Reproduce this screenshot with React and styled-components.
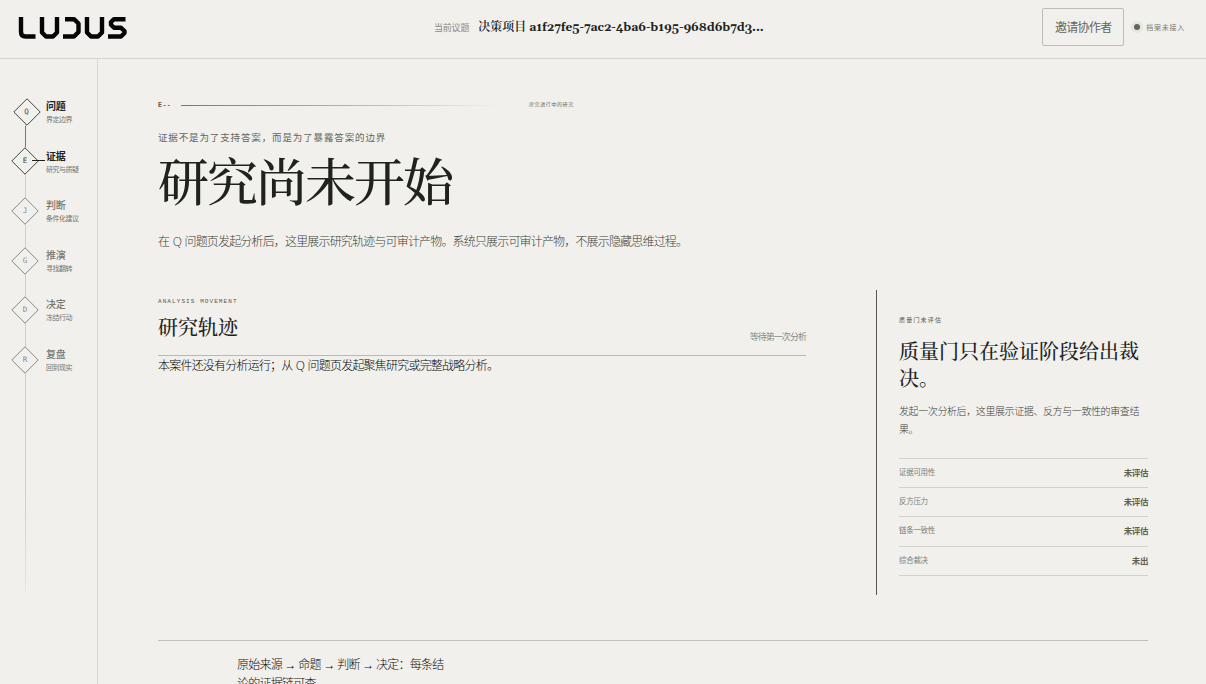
import React from "react";
import styled, { createGlobalStyle } from "styled-components";

const sans = `"Open Sans", "Noto Sans CJK SC", sans-serif`;
const cjk = `"Noto Sans CJK SC", sans-serif`;
const serif = `"Liberation Serif", "Noto Serif CJK SC", "Noto Serif SC", "Source Han Serif SC", "Noto Sans CJK SC", serif`;
const mono = `"Liberation Mono", "Noto Sans CJK SC", monospace`;

const steps = [
  { code: "Q", title: "问题", note: "界定边界", state: "done" },
  { code: "E", title: "证据", note: "研究与质疑", state: "current" },
  { code: "J", title: "判断", note: "条件化建议" },
  { code: "G", title: "推演", note: "寻找翻转" },
  { code: "D", title: "决定", note: "冻结行动" },
  { code: "R", title: "复盘", note: "回到现实" },
];

const gates = [
  ["证据可用性", "未评估"],
  ["反方压力", "未评估"],
  ["链条一致性", "未评估"],
  ["综合裁决", "未出"],
];

const Logo = () => (
  <StyledLogo viewBox="0 0 110 24" fill="none" aria-label="LUDUS">
    <path d="M3 1V16Q3 20.5 7.5 20.5H17.5" />
    <path d="M24 1V16.5L28 20.5H35L39 16.5V1" />
    <path d="M47 3.2H56L60.5 7.5V16L56 20.5H45" />
    <path d="M69 1V16.5L73 20.5H80L84 16.5V1" />
    <path d="M107.5 3.2H96L93 6V8.8L96 11.8H103L106.5 15V17L103 20.5H90" />
  </StyledLogo>
);

const Step = ({ code, title, note, state }) => (
  <StyledStep $state={state}>
    <Diamond $state={state}>
      <svg viewBox="0 0 28 28">
        <path d="M14 .8 27.2 14 14 27.2 .8 14Z" />
      </svg>
      <span>{code}</span>
    </Diamond>
    <StepText $state={state}>
      <strong>{title}</strong>
      <small>{note}</small>
    </StepText>
  </StyledStep>
);

const App = () => (
  <>
    <GlobalStyle />
    <Shell>
      <TopBar>
        <Logo />
        <Topic>
          <span>当前议题</span>
          <strong>
            决策项目 <b>a1f27fe5-7ac2-4ba6-b195-968d6b7d3...</b>
          </strong>
        </Topic>
        <Actions>
          <Invite>邀请协作者</Invite>
          <Status>
            <i />
            档案未接入
          </Status>
        </Actions>
      </TopBar>
      <Body>
        <Rail>
          {steps.map((step) => (
            <Step key={step.code} {...step} />
          ))}
        </Rail>
        <Main>
          <Folio>
            <b>E--</b>
            <hr />
            <span>房完进行中的研究</span>
          </Folio>
          <Lead>证据不是为了支持答案，而是为了暴露答案的边界</Lead>
          <Title>研究尚未开始</Title>
          <Intro>
            在 Q 问题页发起分析后，这里展示研究轨迹与可审计产物。系统只展示可审计产物，不展示隐藏思维过程。
          </Intro>
          <Columns>
            <Movement>
              <Eyebrow>ANALYSIS MOVEMENT</Eyebrow>
              <MovementHead>
                <h2>研究轨迹</h2>
                <span>等待第一次分析</span>
              </MovementHead>
              <Empty>本案件还没有分析运行；从 Q 问题页发起聚焦研究或完整战略分析。</Empty>
            </Movement>
            <Gate>
              <GateLabel>质量门未评估</GateLabel>
              <h2>质量门只在验证阶段给出裁决。</h2>
              <p>发起一次分析后，这里展示证据、反方与一致性的审查结果。</p>
              <dl>
                {gates.map(([name, value]) => (
                  <GateRow key={name}>
                    <dt>{name}</dt>
                    <dd>{value}</dd>
                  </GateRow>
                ))}
              </dl>
            </Gate>
          </Columns>
          <Trace>
            <p>原始来源 → 命题 → 判断 → 决定：每条结论的证据链可查</p>
          </Trace>
        </Main>
      </Body>
    </Shell>
  </>
);

const GlobalStyle = createGlobalStyle`
  * {
    box-sizing: border-box;
  }
  body {
    margin: 0;
    background: #f1f0ec;
    color: #20221e;
    font-family: ${sans};
  }
  h1, h2, p, dl, dd {
    margin: 0;
    font-weight: 400;
  }
`;

const Shell = styled.div`
  display: flex;
  flex-direction: column;
  height: 684px;
  overflow: hidden;
`;

const TopBar = styled.header`
  display: grid;
  grid-template-columns: 434px 1fr auto;
  align-items: center;
  flex: none;
  height: 59px;
  padding-right: 21px;
  padding-bottom: 4px;
  border-bottom: 1px solid #d5d5d0;
`;

const StyledLogo = styled.svg`
  width: 110px;
  height: 24px;
  margin-left: 18px;
  margin-top: 2px;
  path {
    stroke: #050505;
    stroke-width: 4.4;
    stroke-linejoin: round;
  }
`;

const Topic = styled.div`
  display: flex;
  align-items: center;
  gap: 9px;
  white-space: nowrap;
  span {
    font: 9px/14px ${cjk};
    color: #888b84;
    letter-spacing: -0.2px;
    padding-top: 1px;
  }
  strong {
    font: 600 12px/18px ${serif};
  }
  b {
    font: 700 12px/18px Georgia, Gelasio, "DejaVu Serif", serif;
    letter-spacing: -0.06px;
  }
`;

const Actions = styled.div`
  display: flex;
  align-items: center;
  gap: 9px;
`;

const Invite = styled.button`
  width: 82px;
  height: 38px;
  padding: 0 0 1px;
  border: 1px solid #bcbdb7;
  border-radius: 2px;
  background: none;
  color: #62665e;
  font: 400 12px ${cjk};
  letter-spacing: -0.7px;
`;

const Status = styled.div`
  display: flex;
  align-items: center;
  gap: 6px;
  font: 7px/12px ${cjk};
  letter-spacing: 0.75px;
  color: #777b72;
  i {
    width: 6px;
    height: 6px;
    margin-left: 1px;
    border-radius: 50%;
    background: #62665a;
    box-shadow: 0 0 0 3px #e6e5e0;
  }
`;

const Body = styled.div`
  display: flex;
  flex: 1;
  min-height: 0;
`;

const Rail = styled.nav`
  position: relative;
  flex: none;
  width: 98px;
  padding: 38.8px 0 0 11px;
  border-right: 1px solid #d9d9d4;
  &::before {
    content: "";
    position: absolute;
    left: 25px;
    top: 53px;
    width: 1px;
    height: 480px;
    background: linear-gradient(#d0d0cb 80%, #e6e5e1);
  }
`;

const StyledStep = styled.div`
  position: relative;
  display: flex;
  align-items: flex-start;
  height: 49.6px;
  &::before {
    content: "";
    display: ${(props) => (props.$state === "done" ? "block" : "none")};
    position: absolute;
    left: 14px;
    top: 28px;
    width: 1px;
    height: 21px;
    background: #777a73;
  }
  &::after {
    content: "";
    display: ${(props) => (props.$state === "current" ? "block" : "none")};
    position: absolute;
    left: 21px;
    top: 13px;
    width: 13px;
    height: 1px;
    background: #20221e;
  }
`;

const Diamond = styled.div`
  position: relative;
  display: grid;
  place-items: center;
  flex: none;
  width: 28px;
  height: 28px;
  margin-left: ${(props) => (props.$state === "done" ? "1.5px" : "0")};
  margin-right: ${(props) => (props.$state === "done" ? "5.5px" : "7px")};
  color: ${(props) => (props.$state ? "#444741" : "#888b84")};
  svg,
  span {
    grid-area: 1 / 1;
  }
  path {
    fill: #f1f0ec;
    stroke: currentColor;
    stroke-width: 1;
  }
  span {
    z-index: 1;
    font: 7.5px/10px "DejaVu Sans Mono", ${mono};
  }
`;

const StepText = styled.div`
  display: flex;
  flex-direction: column;
  padding-top: 1.3px;
  white-space: nowrap;
  strong {
    font: ${(props) => (props.$state ? 700 : 500)} 10px/14px ${cjk};
    letter-spacing: -0.2px;
    color: ${(props) => (props.$state ? "#20221e" : "#777a73")};
  }
  small {
    font: 7px/12px ${cjk};
    letter-spacing: -0.5px;
    color: #72756e;
  }
`;

const Main = styled.main`
  flex: 1;
  min-width: 0;
  padding: 39px 58px 0 60px;
`;

const Folio = styled.div`
  display: flex;
  align-items: center;
  height: 14px;
  b {
    width: 23px;
    padding-top: 1px;
    white-space: nowrap;
    font: 700 6.5px/10px ${mono};
    letter-spacing: 0.5px;
    color: #555a51;
  }
  hr {
    width: 318px;
    height: 1px;
    margin: 0 30px 0 0;
    border: 0;
    background: linear-gradient(90deg, #777a73, #b0b1ac 50%, #f1f0ec);
  }
  span {
    margin-top: -2px;
    font: 5px/10px ${cjk};
    letter-spacing: 0.6px;
    color: #666961;
  }
`;

const Lead = styled.p`
  margin-top: 18px;
  font: 9.5px/14px ${cjk};
  letter-spacing: 0.87px;
  color: #62665e;
`;

const Title = styled.h1`
  margin-top: 9px;
  font: 500 51px/62px ${serif};
  letter-spacing: -2px;
`;

const Intro = styled.p`
  margin-top: 17px;
  font: 300 12px/20px ${sans};
  letter-spacing: -0.83px;
  word-spacing: 1.2px;
  color: #3c4039;
  white-space: nowrap;
`;

const Columns = styled.div`
  display: grid;
  grid-template-columns: 648px 272px;
  justify-content: space-between;
  height: 305px;
  margin-top: 38px;
`;

const Movement = styled.section`
  padding-top: 5px;
`;

const Eyebrow = styled.div`
  padding-top: 1px;
  font: 6px/12px ${mono};
  letter-spacing: 1.08px;
  color: #555a51;
`;

const MovementHead = styled.div`
  display: flex;
  justify-content: space-between;
  align-items: flex-end;
  height: 48px;
  border-bottom: 1px solid #b9bab4;
  h2 {
    margin-bottom: 12px;
    font: 500 20px/30px ${serif};
  }
  span {
    margin-bottom: 11px;
    font: 9px/14px ${cjk};
    letter-spacing: -0.95px;
    color: #888b84;
  }
`;

const Empty = styled.p`
  font: 300 12px/20px ${sans};
  letter-spacing: -0.79px;
  word-spacing: 1px;
  color: #050604;
`;

const Gate = styled.aside`
  padding: 24px 0 0 22px;
  border-left: 1px solid #555852;
  h2 {
    margin-top: 13px;
    font: 500 20px/27px ${serif};
  }
  p {
    margin-top: 9px;
    font: 300 10px/18px ${cjk};
    letter-spacing: -0.4px;
    color: #3c4039;
  }
  dl {
    margin-top: 19.5px;
    border-top: 1px solid #d3d3ce;
  }
`;

const GateLabel = styled.div`
  font: 6px/12px ${cjk};
  letter-spacing: 1.2px;
  color: #555a51;
`;

const GateRow = styled.div`
  display: flex;
  justify-content: space-between;
  align-items: center;
  height: 29.4px;
  padding-bottom: 2px;
  border-bottom: 1px solid #d3d3ce;
  dt {
    font: 7.5px/12px ${cjk};
    letter-spacing: -0.3px;
    color: #7c7f78;
  }
  dd {
    font: 700 8.5px/12px ${cjk};
    letter-spacing: -0.4px;
    color: #62604e;
  }
`;

const Trace = styled.section`
  margin-top: 45px;
  padding: 15px 0 0 79px;
  border-top: 1px solid #c0c0bb;
  p {
    width: 210px;
    font: 300 12px/19px "Liberation Sans", ${sans};
    letter-spacing: -0.76px;
    color: #0c0e0a;
  }
`;

export default App;
